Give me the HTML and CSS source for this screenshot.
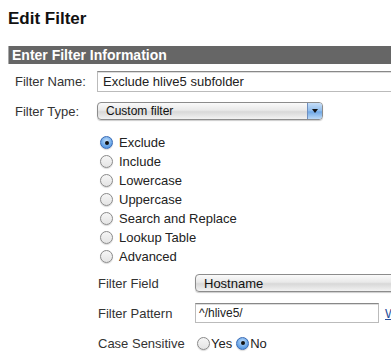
FILE: index.html
```html
<!DOCTYPE html>
<html lang="en">
<head>
  <meta charset="UTF-8" />
  <title>Edit Filter</title>
  <link rel="stylesheet" href="styles.css">
</head>
<body>
  <h2 class="title">Edit Filter</h2>
  <div class="panel">
    <div class="panel-head">Enter Filter Information</div>
    <div class="row">
      <div class="label">Filter Name:</div>
      <div class="text-input wide">Exclude hlive5 subfolder</div>
    </div>
    <div class="row">
      <div class="label">Filter Type:</div>
      <div class="select type-select">
        <span class="select-text">Custom filter</span>
        <span class="select-btn"><span class="caret"></span></span>
      </div>
    </div>
    <div class="radios">
      <label class="radio-row"><span class="radio checked"></span>Exclude</label>
      <label class="radio-row"><span class="radio"></span>Include</label>
      <label class="radio-row"><span class="radio"></span>Lowercase</label>
      <label class="radio-row"><span class="radio"></span>Uppercase</label>
      <label class="radio-row"><span class="radio"></span>Search and Replace</label>
      <label class="radio-row"><span class="radio"></span>Lookup Table</label>
      <label class="radio-row"><span class="radio"></span>Advanced</label>
    </div>
    <div class="sub">
      <div class="sub-row">
        <div class="sub-label">Filter Field</div>
        <div class="select field-select">
          <span class="select-text">Hostname</span>
        </div>
      </div>
      <div class="sub-row">
        <div class="sub-label">Filter Pattern</div>
        <div class="text-input pattern">^/hlive5/</div>
        <a class="help" href="#">W</a>
      </div>
      <div class="sub-row">
        <div class="sub-label">Case Sensitive</div>
        <div class="inline-radios">
          <span class="radio"></span><span class="opt">Yes</span>
          <span class="radio checked"></span><span class="opt">No</span>
        </div>
      </div>
    </div>
  </div>
</body>
</html>
```

FILE: styles.css
```css
* {
  box-sizing: border-box;
  margin: 0;
  padding: 0;
}
html {
  overflow: hidden;
}
body {
  font-family: "Liberation Sans", Arial, sans-serif;
  font-size: 13px;
  color: #222;
  background: #fff;
  padding-left: 8px;
  width: 460px;
}
.title {
  font-size: 17px;
  font-weight: bold;
  color: #111;
  line-height: 20px;
  padding-top: 9px;
  height: 46px;
}
.panel-head {
  background: #666;
  border-left: 1px solid #a8a8a8;
  color: #fff;
  font-weight: bold;
  font-size: 14px;
  line-height: 18px;
  height: 18px;
  padding-left: 3px;
}
.row {
  display: flex;
  align-items: center;
  padding-left: 7px;
}
.row:nth-child(2) {
  margin-top: 7px;
}
.row:nth-child(3) {
  margin-top: 10px;
}
.label {
  width: 82px;
  flex: none;
  color: #333;
}
.text-input {
  flex: none;
  height: 21px;
  border: 1px solid #bbb;
  border-top-color: #888;
  box-shadow: inset 0 1px 0 #ddd;
  padding-left: 5px;
  line-height: 19px;
  background: #fff;
}
.wide {
  width: 330px;
}
.select {
  flex: none;
  height: 18px;
  border: 1px solid #8c8c8c;
  border-radius: 4px;
  background: linear-gradient(#fafafa, #e9e9e9 45%, #d8d8d8 55%, #f2f2f2);
  box-shadow: 0 1px 1px rgba(0, 0, 0, 0.2);
  display: flex;
  align-items: center;
  font-size: 12px;
  color: #111;
  overflow: hidden;
}
.select-text {
  flex: 1;
  padding-left: 8px;
}
.type-select {
  width: 226px;
}
.select-btn {
  width: 15px;
  height: 100%;
  border-left: 1px solid #6f8fbf;
  background: linear-gradient(#c6def8, #8fbcec 50%, #6fa7e5 55%, #bcdaf7);
  display: flex;
  align-items: center;
  justify-content: center;
}
.caret {
  border-left: 3px solid transparent;
  border-right: 3px solid transparent;
  border-top: 4px solid #111;
}
.radios {
  padding-left: 92px;
  margin-top: 13px;
}
.radio-row {
  display: flex;
  align-items: center;
  height: 19px;
  color: #222;
}
.radio {
  width: 13px;
  height: 13px;
  border-radius: 50%;
  border: 1px solid #8a8a8a;
  background: linear-gradient(#f6f6f6, #e4e4e4);
  box-shadow: 0 1px 1px rgba(0, 0, 0, 0.15);
  margin-right: 6px;
  display: inline-flex;
  align-items: center;
  justify-content: center;
  flex: none;
}
.radio.checked {
  border-color: #3a6bb5;
  background: radial-gradient(circle at 50% 35%, #c4e0fb, #6aa6e8 60%, #3f85d8);
}
.radio.checked::after {
  content: "";
  width: 4px;
  height: 4px;
  border-radius: 50%;
  background: #111;
}
.sub {
  padding-left: 90px;
  margin-top: 7px;
}
.sub-row {
  display: flex;
  align-items: center;
  height: 20px;
  margin-bottom: 10px;
}
.sub-label {
  width: 97px;
  flex: none;
  color: #333;
}
.field-select {
  width: 220px;
  font-size: 13px;
}
.pattern {
  width: 184px;
  height: 20px;
  font-size: 12px;
  padding-left: 3px;
}
.help {
  margin-left: 6px;
  color: #2a4f9b;
}
.inline-radios {
  display: flex;
  align-items: center;
  margin-left: 2px;
}
.inline-radios .radio {
  margin-right: 1px;
}
.opt {
  margin-right: 4px;
}
```
